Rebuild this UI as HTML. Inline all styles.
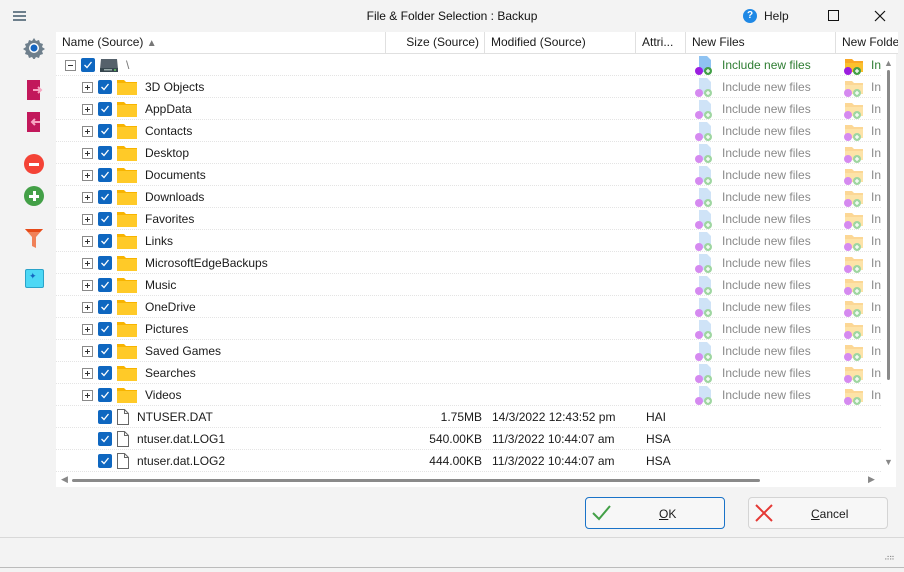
<!DOCTYPE html>
<html><head><meta charset="utf-8"><style>
*{margin:0;padding:0;box-sizing:border-box}
body{width:904px;height:572px;background:#f3f3f3;font-family:"Liberation Sans",sans-serif;font-size:12px;color:#1a1a1a;position:relative;overflow:hidden}
.a{position:absolute}
.hdr{position:absolute;top:32px;height:22px;line-height:21px;border-right:1px solid #e0e0e0;border-bottom:1px solid #e0e0e0;padding-left:6px;background:#fff;white-space:nowrap;overflow:hidden}
.row{position:absolute;left:56px;width:825px;height:22px;border-bottom:1px dotted #e4e4e4}
.pm{position:absolute;top:6px;width:11px;height:11px;border:1px solid #8a8a8a;background:#fff}
.pm:before{content:"";position:absolute;left:2px;top:4px;width:5px;height:1px;background:#333}
.pm.p:after{content:"";position:absolute;left:4px;top:2px;width:1px;height:5px;background:#333}
.cb{position:absolute;top:4px;width:14px;height:14px;background:#0f67c0;border-radius:2px}
.cb svg{position:absolute;left:2px;top:2px}
.fd{position:absolute;top:3px;width:20px;height:16px}
.t{position:absolute;top:4px;white-space:nowrap}
.nf{position:absolute;left:638px;top:1px;width:22px;height:21px}
.nft{position:absolute;left:666px;top:4px;color:#8a8a8a}
.nd{position:absolute;left:787px;top:2px;width:22px;height:20px}
.ndt{position:absolute;left:815px;top:4px;color:#8a8a8a}
</style></head><body>
<div class="a" style="left:13px;top:11px;width:13px;height:2px;background:#6d7f8c;box-shadow:0 4px 0 #6d7f8c,0 8px 0 #6d7f8c"></div>
<div class="a" style="left:0;width:904px;top:9px;text-align:center;font-size:12px;color:#111">File &amp; Folder Selection : Backup</div>
<div class="a" style="left:743px;top:9px;width:14px;height:14px;border-radius:50%;background:#1e88e5;color:#fff;font-size:10px;font-weight:bold;text-align:center;line-height:14px">?</div>
<div class="a" style="left:764px;top:9px;font-size:12px">Help</div>
<div class="a" style="left:828px;top:10px;width:11px;height:11px;border:1px solid #111"></div>
<svg class="a" style="left:874px;top:10px" width="12" height="12"><path d="M1 1L11 11M11 1L1 11" stroke="#111" stroke-width="1.2"/></svg>
<svg class="a" style="left:23px;top:37px" width="22" height="22" viewBox="0 0 22 22"><path d="M11 1l2 3 3-1 1 3 3 1-1 3 3 2-3 2 1 3-3 1-1 3-3-1-2 3-2-3-3 1-1-3-3-1 1-3-3-2 3-2-1-3 3-1 1-3 3 1z" fill="#6e7f8c"/><circle cx="11" cy="11" r="5" fill="#fff"/><circle cx="11" cy="11" r="3.5" fill="#1565c0"/></svg>
<svg class="a" style="left:26px;top:79px" width="18" height="22"><rect x="1" y="1" width="13" height="20" fill="#c2185b"/><path d="M7 11h7M12 8l3 3-3 3" stroke="#f8a5c2" stroke-width="2" fill="none"/></svg>
<svg class="a" style="left:26px;top:111px" width="18" height="22"><rect x="1" y="1" width="13" height="20" fill="#c2185b"/><path d="M6 11h8M9 8l-3 3 3 3" stroke="#f8a5c2" stroke-width="2" fill="none"/></svg>
<div class="a" style="left:24px;top:154px;width:20px;height:20px;border-radius:50%;background:#f44336"></div>
<div class="a" style="left:29px;top:163px;width:10px;height:3px;background:#fff"></div>
<div class="a" style="left:24px;top:186px;width:20px;height:20px;border-radius:50%;background:#43a047"></div>
<div class="a" style="left:29px;top:195px;width:10px;height:3px;background:#fff"></div>
<div class="a" style="left:32.5px;top:191px;width:3px;height:10px;background:#fff"></div>
<svg class="a" style="left:24px;top:228px" width="20" height="22"><path d="M1 1h18l-7 8v11l-4-2V9z" fill="#f08158"/><path d="M1 1h18l-3 3H4z" fill="#e64a19"/></svg>
<div class="a" style="left:25px;top:269px;width:19px;height:19px;background:#4dd8f5;border:1px solid #2aa3c9;border-radius:2px"></div>
<div class="a" style="left:29px;top:271px;color:#1565c0;font-size:9px">✦</div>
<div class="a" style="left:56px;top:32px;width:840px;height:455px;background:#fff"></div>
<div class="hdr" style="left:56px;width:330px">Name (Source) <span style="color:#777;font-size:10px">▲</span></div>
<div class="hdr" style="left:386px;width:99px;text-align:right;padding-right:5px">Size (Source)</div>
<div class="hdr" style="left:485px;width:151px">Modified (Source)</div>
<div class="hdr" style="left:636px;width:50px">Attri...</div>
<div class="hdr" style="left:686px;width:150px">New Files</div>
<div class="hdr" style="left:836px;width:62px;border-right:none;text-overflow:clip">New Folders</div>
<div class="a" style="left:881px;top:54px;width:15px;height:418px;background:#fff"></div>
<div class="a" style="left:884px;top:58px;color:#888;font-size:9px">▲</div>
<div class="a" style="left:887px;top:70px;width:3px;height:310px;background:#8a8a8a;border-radius:2px"></div>
<div class="a" style="left:884px;top:457px;color:#888;font-size:9px">▼</div>
<div class="a" style="left:56px;top:472px;width:840px;height:15px;background:#fff"></div>
<div class="a" style="left:61px;top:474px;color:#888;font-size:9px">◀</div>
<div class="a" style="left:72px;top:479px;width:688px;height:3px;background:#8a8a8a;border-radius:2px"></div>
<div class="a" style="left:868px;top:474px;color:#888;font-size:9px">▶</div>
<div id="rows"></div>
<script>
var names=["3D Objects","AppData","Contacts","Desktop","Documents","Downloads","Favorites","Links","MicrosoftEdgeBackups","Music","OneDrive","Pictures","Saved Games","Searches","Videos"];
var ck='<svg width="10" height="10"><path d="M1.5 5l2.5 2.5L8.5 2" stroke="#fff" stroke-width="1.3" fill="none"/></svg>';
function nf(dim){return '<svg class="nf" viewBox="0 0 22 21"><path d="M5 1h8l4 4v12H5z" fill="'+(dim?'#cfe3f7':'#8fc3f2')+'"/><circle cx="5" cy="16" r="4" fill="'+(dim?'#d58af0':'#9c1ee0')+'"/><circle cx="14" cy="16" r="4" fill="'+(dim?'#9fd6a1':'#43a047')+'"/><path d="M12 16h4M14 14v4" stroke="#fff" stroke-width="1.3"/></svg>';}
function nd(dim){return '<svg class="nd" viewBox="0 0 22 20"><path d="M2 3h7l2 2h9v11H2z" fill="'+(dim?'#fcd795':'#f9a825')+'"/><path d="M2 7h18v9H2z" fill="'+(dim?'#fde3a8':'#fbc02d')+'"/><circle cx="5" cy="15" r="4" fill="'+(dim?'#d58af0':'#9c1ee0')+'"/><circle cx="14" cy="15" r="4" fill="'+(dim?'#9fd6a1':'#43a047')+'"/><path d="M12 15h4M14 13v4" stroke="#fff" stroke-width="1.3"/></svg>';}
var fold='<svg class="fd" style="left:61px" viewBox="0 0 20 16"><path d="M0 1h7l2 2h11v13H0z" fill="#f8b400"/><path d="M0 4h20v12H0z" fill="#ffca28"/></svg>';
var h='';
h+='<div class="row" style="top:54px"><div class="pm" style="left:9px"></div><div class="cb" style="left:25px">'+ck+'</div><svg class="fd" style="left:43px;width:20px" viewBox="0 0 20 16"><path d="M2 2h16l1 10H1z" fill="#55616b"/><rect x="1" y="11" width="18" height="4" fill="#37474f"/><rect x="5" y="12" width="8" height="1.5" fill="#9aa"/><circle cx="16" cy="13" r="1" fill="#6c6"/></svg><div class="t" style="left:70px;color:#777">\\</div>'+nf(0)+'<div class="nft" style="color:#2e7d32">Include new files</div>'+nd(0)+'<div class="ndt" style="color:#2e7d32">In</div></div>';
for(var i=0;i<names.length;i++){var y=76+i*22;
h+='<div class="row" style="top:'+y+'px"><div class="pm p" style="left:26px"></div><div class="cb" style="left:42px">'+ck+'</div>'+fold+'<div class="t" style="left:89px">'+names[i]+'</div>'+nf(1)+'<div class="nft">Include new files</div>'+nd(1)+'<div class="ndt">In</div></div>';}
var files=[["NTUSER.DAT","1.75MB","14/3/2022 12:43:52 pm","HAI"],["ntuser.dat.LOG1","540.00KB","11/3/2022 10:44:07 am","HSA"],["ntuser.dat.LOG2","444.00KB","11/3/2022 10:44:07 am","HSA"]];
for(var j=0;j<3;j++){var y=406+j*22;var f=files[j];
h+='<div class="row" style="top:'+y+'px"><div class="cb" style="left:42px">'+ck+'</div><svg class="fd" style="left:60px;width:14px" viewBox="0 0 14 16"><path d="M1.5 .5h7l4 4v11h-11z" fill="#fff" stroke="#666"/><path d="M8.5 .5v4h4" fill="none" stroke="#666"/></svg><div class="t" style="left:81px">'+f[0]+'</div><div class="t" style="left:330px;width:96px;text-align:right">'+f[1]+'</div><div class="t" style="left:436px">'+f[2]+'</div><div class="t" style="left:590px">'+f[3]+'</div></div>';}
document.getElementById('rows').innerHTML=h;
</script>
<div class="a" style="left:585px;top:497px;width:140px;height:32px;border:1px solid #1a73c8;border-radius:4px;background:#f7f7f7"></div>
<svg class="a" style="left:591px;top:504px" width="20" height="18"><path d="M2 9l6 6L19 2" stroke="#43a047" stroke-width="2" fill="none"/></svg>
<div class="a" style="left:659px;top:507px;font-size:12px"><u>O</u>K</div>
<div class="a" style="left:748px;top:497px;width:140px;height:32px;border:1px solid #d4d4d4;border-radius:4px;background:#f7f7f7"></div>
<svg class="a" style="left:754px;top:503px" width="20" height="20"><path d="M2 2L18 18M18 2L2 18" stroke="#e53935" stroke-width="2"/></svg>
<div class="a" style="left:811px;top:507px;font-size:12px"><u>C</u>ancel</div>
<div class="a" style="left:0;top:537px;width:904px;height:1px;background:#d8d8d8"></div>
<div class="a" style="left:0;top:567px;width:904px;height:1px;background:#bbb"></div>
<div class="a" style="left:884px;top:553px;color:#888;font-size:8px;letter-spacing:-1px">⠴⠶</div>
</body></html>
